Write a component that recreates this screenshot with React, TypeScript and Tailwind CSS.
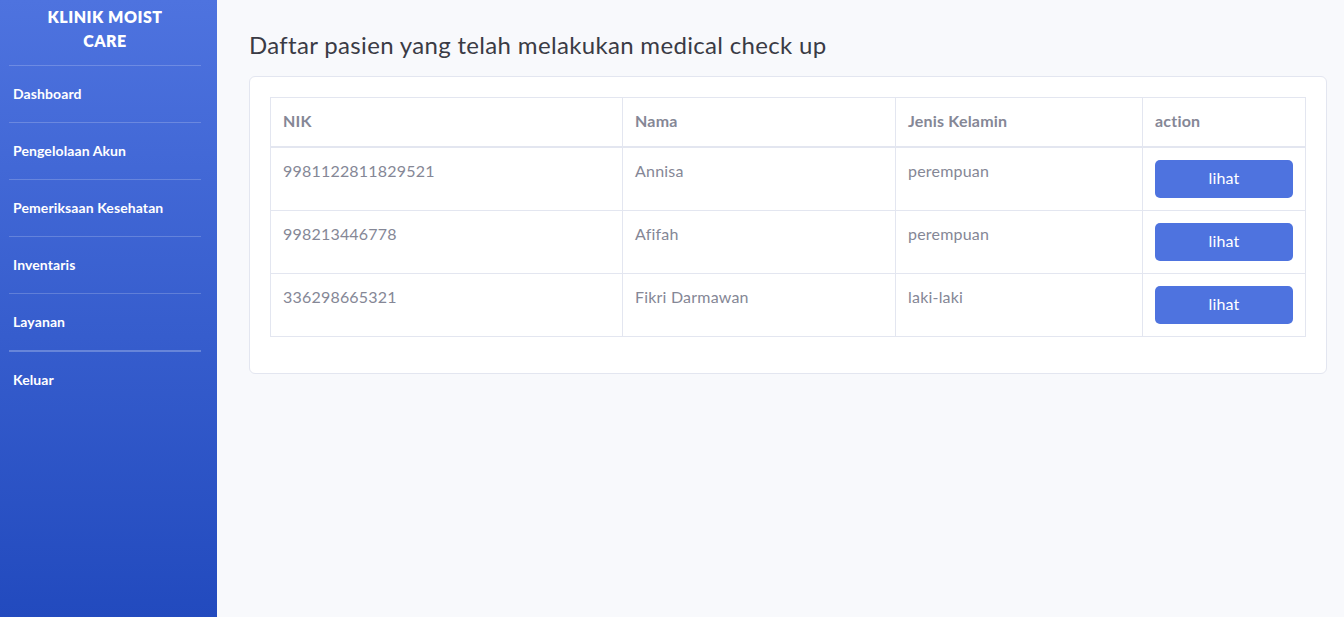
import React from "react";

export default function App() {
  const menu = [
    "Dashboard",
    "Pengelolaan Akun",
    "Pemeriksaan Kesehatan",
    "Inventaris",
    "Layanan",
    "Keluar",
  ];

  const patients = [
    { nik: "9981122811829521", nama: "Annisa", jk: "perempuan" },
    { nik: "998213446778", nama: "Afifah", jk: "perempuan" },
    { nik: "336298665321", nama: "Fikri Darmawan", jk: "laki-laki" },
  ];

  return (
    <div
      className="flex min-h-[617px] bg-[#f8f9fc]"
      style={{ fontFamily: '"Lato", "Noto Sans", sans-serif' }}
    >
      {/* Sidebar */}
      <aside className="w-[217px] shrink-0 bg-gradient-to-b from-[#4e73df] to-[#224abe] text-white">
        <div className="ml-[9px] w-[192px]">
          <div className="pt-[5px] pb-[12px] text-center text-[16px] leading-[24px] font-extrabold tracking-[0.5px]">
            KLINIK MOIST
            <br />
            CARE
          </div>
          {menu.map((item, idx) => (
            <div key={item}>
              <div
                className={
                  idx === 5
                    ? "border-t-2 border-white/25"
                    : "border-t border-white/20"
                }
              />
              <div className="flex h-[56px] items-center pl-[4px] pb-[2px] text-[14px] font-bold tracking-[0.1px]">
                {item}
              </div>
            </div>
          ))}
        </div>
      </aside>

      {/* Main content */}
      <main className="flex-1 pl-[32px] pr-[17px] pt-[30px]">
        <h3 className="mb-[17px] text-[24px] leading-[29px] tracking-[0.33px] text-[#3a3b45]">
          Daftar pasien yang telah melakukan medical check up
        </h3>

        <div className="rounded-md border border-[#e3e6f0] bg-white p-5">
          <table className="mb-4 w-full border-collapse text-[16px] tracking-[0.2px] text-[#858796]">
            <thead>
              <tr>
                <th className="w-[352px] border border-b-2 border-[#e3e6f0] px-3 pt-[11px] pb-[13px] text-left font-bold leading-6">
                  NIK
                </th>
                <th className="w-[273px] border border-b-2 border-[#e3e6f0] px-3 pt-[11px] pb-[13px] text-left font-bold leading-6">
                  Nama
                </th>
                <th className="w-[247px] border border-b-2 border-[#e3e6f0] px-3 pt-[11px] pb-[13px] text-left font-bold leading-6">
                  Jenis Kelamin
                </th>
                <th className="border border-b-2 border-[#e3e6f0] px-3 pt-[11px] pb-[13px] text-left font-bold leading-6">
                  action
                </th>
              </tr>
            </thead>
            <tbody>
              {patients.map((p) => (
                <tr key={p.nik}>
                  <td className="border border-[#e3e6f0] px-3 pt-[11px] pb-[13px] align-top leading-6">
                    {p.nik}
                  </td>
                  <td className="border border-[#e3e6f0] px-3 pt-[11px] pb-[13px] align-top leading-6">
                    {p.nama}
                  </td>
                  <td className="border border-[#e3e6f0] px-3 pt-[11px] pb-[13px] align-top leading-6">
                    {p.jk}
                  </td>
                  <td className="border border-[#e3e6f0] px-3 py-3 align-top">
                    <button className="block h-[38px] w-full rounded-[5px] bg-[#4e73df] pb-[3px] text-[16px] text-white">
                      lihat
                    </button>
                  </td>
                </tr>
              ))}
            </tbody>
          </table>
        </div>
      </main>
    </div>
  );
}
